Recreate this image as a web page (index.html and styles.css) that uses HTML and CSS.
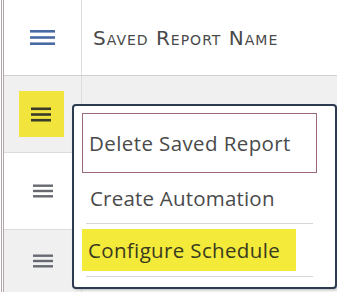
FILE: index.html
```html
<!DOCTYPE html>
<html>
<head>
<meta charset="utf-8">
<link rel="stylesheet" href="styles.css">
</head>
<body>
<div class="table">
  <div class="row head">
    <div class="cell icon-cell">
      <svg class="burger blue" width="25" height="17" viewBox="0 0 25 17"><rect x="0" y="1" width="25" height="2.6"/><rect x="0" y="7.2" width="25" height="2.6"/><rect x="0" y="13.4" width="25" height="2.6"/></svg>
    </div>
    <div class="cell name-cell"><span class="title">Saved Report Name</span></div>
  </div>
  <div class="row alt">
    <div class="cell icon-cell">
      <div class="hl-btn">
        <svg class="burger dark" width="20" height="15" viewBox="0 0 20 15"><rect x="0" y="0.5" width="20" height="2.6"/><rect x="0" y="6.2" width="20" height="2.6"/><rect x="0" y="11.9" width="20" height="2.6"/></svg>
      </div>
    </div>
    <div class="cell name-cell"></div>
  </div>
  <div class="row">
    <div class="cell icon-cell">
      <svg class="burger gray" width="20" height="14" viewBox="0 0 20 14"><rect x="0" y="0.5" width="20" height="2.4"/><rect x="0" y="5.8" width="20" height="2.4"/><rect x="0" y="11.1" width="20" height="2.4"/></svg>
    </div>
    <div class="cell name-cell link-cell"><a class="link">Template</a></div>
  </div>
  <div class="row alt last">
    <div class="cell icon-cell">
      <svg class="burger gray" width="20" height="14" viewBox="0 0 20 14"><rect x="0" y="0.5" width="20" height="2.4"/><rect x="0" y="5.8" width="20" height="2.4"/><rect x="0" y="11.1" width="20" height="2.4"/></svg>
    </div>
    <div class="cell name-cell link-cell"><a class="link">Events E</a></div>
  </div>
</div>

<div class="menu">
  <div class="item boxed">Delete Saved Report</div>
  <div class="item plain">Create Automation</div>
  <div class="sep"></div>
  <div class="item yellow">Configure Schedule</div>
  <div class="sep"></div>
</div>
</body>
</html>
```

FILE: styles.css
```css
html, body {
  margin: 0;
  padding: 0;
  width: 337px;
  height: 292px;
  overflow: hidden;
  background: #ffffff;
  font-family: "Open Sans", "Liberation Sans", sans-serif;
}

.table {
  margin-left: 1px;
  border-left: 3px double #b3a7aa;
  height: 292px;
  display: flex;
  flex-direction: column;
}

.row {
  display: grid;
  grid-template-columns: 78px 1fr;
  height: 76px;
  border-bottom: 1px solid #dcdcdc;
  background: #ffffff;
}

.row.head {
  height: 75px;
  border-bottom: 1px solid #cfcfcf;
}

.row.alt {
  background: #f0f0f0;
}

.row.last {
  flex: 1;
  border-bottom: none;
}

.cell {
  display: flex;
  align-items: center;
}

.icon-cell {
  justify-content: center;
  border-right: 1px solid #dedede;
}

.burger.blue { fill: #4a6aa3; }
.burger.dark { fill: #3b3b2a; }
.burger.gray { fill: #666a70; }

.hl-btn {
  width: 45px;
  height: 46px;
  background: #f1e43d;
  display: flex;
  align-items: center;
  justify-content: center;
  margin-left: -3px;
}

.name-cell {
  padding-left: 11px;
  overflow: hidden;
}

.title {
  font-family: "DejaVu Sans", "Verdana", sans-serif;
  font-variant: small-caps;
  font-size: 20px;
  color: #4a4a4a;
  letter-spacing: 1px;
  margin-top: 1px;
  white-space: nowrap;
}

.link-cell {
  justify-content: flex-end;
  white-space: nowrap;
}

.link {
  color: #3a5ca8;
  text-decoration: underline;
  font-size: 20px;
  margin-right: -2px;
}

.row.last .link-cell {
  align-items: flex-start;
  padding-top: 26px;
}

.menu {
  position: absolute;
  left: 72px;
  top: 104px;
  width: 253px;
  height: 174px;
  border: 2px solid #2d3b50;
  border-radius: 4px;
  background: #ffffff;
  box-shadow: 1px 1px 2px rgba(0,0,0,0.2);
  padding: 7px 0 0 8px;
  display: flex;
  flex-direction: column;
}

.item {
  font-size: 20.5px;
  color: #4a4a4a;
  letter-spacing: 0.2px;
  padding-left: 6px;
  box-sizing: border-box;
  display: flex;
  align-items: center;
  white-space: nowrap;
}

.item.boxed {
  width: 235px;
  height: 60px;
  border: 1px solid #9c6b78;
  letter-spacing: 0.4px;
}

.item.plain {
  height: 50px;
  padding-left: 8px;
}

.sep {
  margin-left: 4px;
  width: 227px;
  height: 1px;
  flex: none;
  background: #d6d6d6;
}

.item.yellow {
  margin-top: 5px;
  width: 214px;
  height: 42px;
  background: #f3ea3a;
  color: #3a3a20;
  margin-bottom: 5px;
  flex: none;
  letter-spacing: 0.35px;
}
```
